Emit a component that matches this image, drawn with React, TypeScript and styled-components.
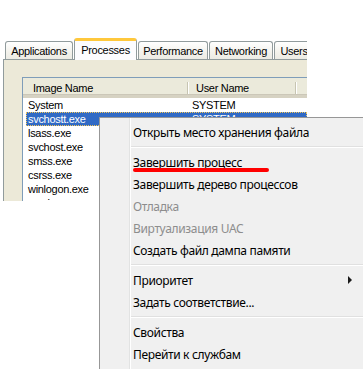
import styled, { createGlobalStyle } from "styled-components";

const GlobalStyle = createGlobalStyle`
    html, body {
        margin: 0;
        padding: 0;
        background: #fff;
    }
    body {
        width: 363px;
        height: 369px;
        overflow: hidden;
    }
`;

const Page = styled.div`
    position: relative;
    width: 363px;
    height: 369px;
    overflow: hidden;
    background: #fff;
`;

// the pasted XP task manager crop
const Shot = styled.div`
    display: flex;
    flex-direction: column;
    margin-top: 37px;
    padding-left: 3px;
    width: 304px;
    height: 164px;
    overflow: hidden;
    font-family: "Liberation Sans", Arial, sans-serif;
    font-size: 11px;
    letter-spacing: -0.3px;
    color: #000;
`;

const TabStrip = styled.div`
    display: flex;
    align-items: flex-end;
    gap: 1px;
    height: 22px;
    padding-left: 2px;
    position: relative;
    z-index: 1;
    flex-shrink: 0;
`;

const Tab = styled.div<{ $w: number; $active?: boolean }>`
    box-sizing: border-box;
    flex-shrink: 0;
    width: ${(p) => p.$w}px;
    height: ${(p) => (p.$active ? 22 : 18)}px;
    margin-bottom: ${(p) => (p.$active ? -1 : 0)}px;
    display: flex;
    align-items: center;
    justify-content: center;
    border: 1px solid #919b9c;
    border-bottom: none;
    border-top: ${(p) => (p.$active ? "3px solid #ffc83c" : "1px solid #919b9c")};
    border-radius: 3px 3px 0 0;
    background: ${(p) =>
        p.$active ? "#fcfcfe" : "linear-gradient(#ffffff, #f3f2ec 60%, #ecebe4)"};
    padding-bottom: ${(p) => (p.$active ? 2 : 0)}px;
    white-space: nowrap;
`;

const Panel = styled.div`
    flex: 1;
    border-top: 1px solid #919b9c;
    border-left: 1px solid #919b9c;
    background: #ece9d8;
    padding: 17px 0 0 18px;
`;

const List = styled.div`
    border: 1px solid #7f9db9;
    border-right: none;
    background: #fff;
    height: 200px;
`;

const Header = styled.div`
    display: flex;
    height: 17px;
    background: #ebeadb;
    border-bottom: 3px solid #d6d2c2;
    box-shadow: inset 0 -1px 0 #cbc7b8;
`;

const HeadCell = styled.div<{ $w: number; $pad: number }>`
    box-sizing: border-box;
    width: ${(p) => p.$w}px;
    padding-left: ${(p) => p.$pad}px;
    display: flex;
    align-items: center;
    position: relative;
    padding-top: 2px;

    &::after {
        content: "";
        position: absolute;
        right: 0;
        top: 4px;
        bottom: 1px;
        width: 1px;
        background: #c7c5b2;
        box-shadow: 1px 0 0 #fff;
    }
`;

const Row = styled.div<{ $selected?: boolean }>`
    box-sizing: border-box;
    display: flex;
    height: 14px;
    line-height: 12px;
    margin-left: 3px;
    background: ${(p) => (p.$selected ? "#316ac5" : "transparent")};
    color: ${(p) => (p.$selected ? "#fff" : "#000")};
    border: 1px ${(p) => (p.$selected ? "dotted #f2c65a" : "solid transparent")};
`;

const Cell = styled.div<{ $w: number; $pad: number }>`
    width: ${(p) => p.$w}px;
    padding-left: ${(p) => p.$pad}px;
    box-sizing: border-box;
    white-space: nowrap;
`;

// Win7 context menu lying over the screenshot
const Menu = styled.div`
    position: absolute;
    left: 99px;
    top: 117px;
    width: 280px;
    height: 280px;
    padding: 3px 2px;
    background:
        linear-gradient(to right, transparent 29px, #e2e3e3 29px, #e2e3e3 30px, #fff 30px, #fff 31px, transparent 31px),
        #f0f0f0;
    border: 1px solid #979797;
    font-family: "Noto Sans", "Open Sans", sans-serif;
    font-size: 12px;
    letter-spacing: -0.35px;
    color: #000;
`;

const Item = styled.div<{ $disabled?: boolean; $struck?: boolean }>`
    position: relative;
    height: 22px;
    display: flex;
    align-items: center;
    padding-left: 31px;
    color: ${(p) => (p.$disabled ? "#8d8d8d" : "#000")};
    white-space: nowrap;

    &::after {
        content: "";
        display: ${(p) => (p.$struck ? "block" : "none")};
        position: absolute;
        left: 31px;
        top: 17px;
        width: 136px;
        height: 4px;
        border-radius: 2px;
        background: #f00;
    }
`;

const Arrow = styled.span`
    position: absolute;
    left: 246px;
    top: 7px;
    width: 0;
    height: 0;
    border-top: 4px solid transparent;
    border-bottom: 4px solid transparent;
    border-left: 4px solid #1a1a1a;
`;

const Separator = styled.div`
    height: 8px;
    margin-left: 29px;
    display: flex;
    flex-direction: column;
    justify-content: center;

    &::before {
        content: "";
        height: 1px;
        background: #e0e0e0;
        border-bottom: 1px solid #fff;
    }
`;

const tabs = [
    { label: "Applications", w: 68 },
    { label: "Processes", w: 63, active: true },
    { label: "Performance", w: 70 },
    { label: "Networking", w: 64 },
    { label: "Users", w: 40 },
];

const procs = [
    ["System", "SYSTEM"],
    ["svchostt.exe", "SYSTEM"],
    ["lsass.exe", "SYSTEM"],
    ["svchost.exe", "SYSTEM"],
    ["smss.exe", "SYSTEM"],
    ["csrss.exe", "SYSTEM"],
    ["winlogon.exe", "SYSTEM"],
    ["services.exe", "SYSTEM"],
];

export default function App() {
    return (
        <Page>
            <GlobalStyle />
            <Shot>
                <TabStrip>
                    {tabs.map((t) => (
                        <Tab key={t.label} $w={t.w} $active={t.active}>
                            {t.label}
                        </Tab>
                    ))}
                </TabStrip>
                <Panel>
                    <List>
                        <Header>
                            <HeadCell $w={165} $pad={10}>Image Name</HeadCell>
                            <HeadCell $w={108} $pad={8}>User Name</HeadCell>
                        </Header>
                        {procs.map(([name, user], i) => (
                            <Row key={name} $selected={i === 1}>
                                <Cell $w={161} $pad={1}>{name}</Cell>
                                <Cell $w={110} $pad={4}>{user}</Cell>
                            </Row>
                        ))}
                    </List>
                </Panel>
            </Shot>
            <Menu>
                <Item>Открыть место хранения файла</Item>
                <Separator />
                <Item $struck>Завершить процесс</Item>
                <Item>Завершить дерево процессов</Item>
                <Item $disabled>Отладка</Item>
                <Item $disabled>Виртуализация UAC</Item>
                <Item>Создать файл дампа памяти</Item>
                <Separator />
                <Item>
                    Приоритет
                    <Arrow />
                </Item>
                <Item>Задать соответствие...</Item>
                <Separator />
                <Item>Свойства</Item>
                <Item>Перейти к службам</Item>
            </Menu>
        </Page>
    );
}
